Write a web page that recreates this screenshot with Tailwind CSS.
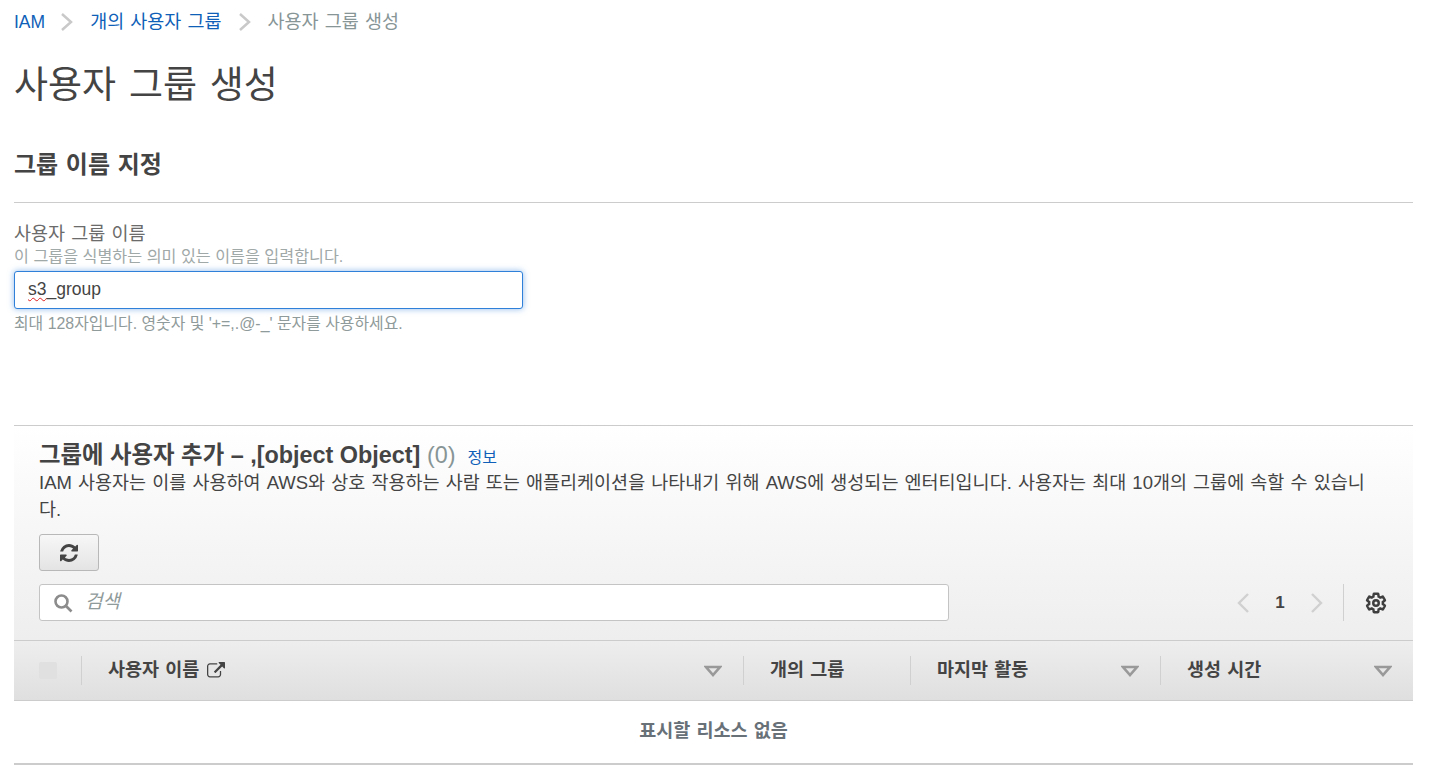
<!DOCTYPE html>
<html lang="ko">
<head>
    <meta charset="UTF-8">
    <title>사용자 그룹 생성</title>
    <script src="https://cdn.jsdelivr.net/npm/@tailwindcss/browser@4"></script>
</head>
<body class="bg-white text-[#444444] font-['Liberation_Sans','Noto_Sans_CJK_KR',sans-serif] overflow-hidden">
    <div class="h-[779px] pl-[14px] pr-[34px]">
        <!-- breadcrumb -->
        <nav class="flex items-center h-[44px] text-[18.500px] [word-spacing:1px]">
            <a href="#" class="text-[#0f5fb8] text-[17.500px]">IAM</a>
            <svg class="w-[14px] h-[18px] ml-[15px] mr-[16px]" viewBox="0 0 14 18" fill="none" stroke="#c9c9c9" stroke-width="2.500"><path d="M2 1l9 8-9 8"/></svg>
            <a href="#" class="text-[#0f5fb8]">개의 사용자 그룹</a>
            <svg class="w-[14px] h-[18px] ml-[16px] mr-[16px]" viewBox="0 0 14 18" fill="none" stroke="#c9c9c9" stroke-width="2.500"><path d="M2 1l9 8-9 8"/></svg>
            <span class="text-[#879596]">사용자 그룹 생성</span>
        </nav>

        <h1 class="text-[37px] leading-[44px] font-normal mt-[20px] [word-spacing:2.500px]">사용자 그룹 생성</h1>

        <section class="mt-[40px]">
            <div class="h-[54px] box-content border-b border-[#cccccc]">
                <h2 class="text-[24px] leading-[28px] font-bold pt-[3px] [word-spacing:1px]">그룹 이름 지정</h2>
            </div>
            <div class="h-[19px]"></div>
            <label class="block text-[18.500px] leading-[24px] text-[#6b6b6b] [word-spacing:1px]">사용자 그룹 이름</label>
            <p class="mt-[1px] text-[16.200px] leading-[18px] text-[#a0a8a8]">이 그룹을 식별하는 의미 있는 이름을 입력합니다.</p>
            <div class="mt-[6px] w-[509px] h-[38px] flex items-center px-[13px] pb-[2px] bg-white border border-[#2f80d8] rounded-[3px] shadow-[0_0_6px_rgba(47,128,216,0.55)] text-[17.500px]">
                <span class="underline decoration-wavy decoration-[#e02020] decoration-1 underline-offset-2">s3</span><span>_group</span>
            </div>
            <p class="mt-[6px] text-[15.900px] leading-[18px] text-[#8f9a9a]">최대 128자입니다. 영숫자 및 '+=,.@-_' 문자를 사용하세요.</p>
        </section>

        <section class="mt-[92px] border-t border-[#cccccc]">
            <div class="bg-gradient-to-b from-white to-[#eeeeee] h-[215px] px-[25px] pt-[16px] border-b border-[#cccccc]">
                <div class="flex items-baseline h-[27px]">
                    <h2 class="text-[23.400px] leading-[27px] font-bold">그룹에 사용자 추가 – ,[object Object] <span class="font-normal text-[#879596]">(0)</span></h2>
                    <a href="#" class="ml-[12px] text-[16px] text-[#0f5fb8]">정보</a>
                </div>
                <p class="text-[18.500px] leading-[27px] w-[1329px] [word-spacing:1px]">IAM 사용자는 이를 사용하여 AWS와 상호 작용하는 사람 또는 애플리케이션을 나타내기 위해 AWS에 생성되는 엔터티입니다. 사용자는 최대 10개의 그룹에 속할 수 있습니다.</p>
                <button class="mt-[11px] flex items-center justify-center w-[60px] h-[37px] rounded-[3px] border border-[#b8b8b8] bg-gradient-to-b from-[#f7f7f7] to-[#e4e4e4]">
                    <svg class="w-[18px] h-[18px]" viewBox="128 128 1536 1536" fill="#444444">
                        <path d="M1639 1056q0 5-1 7-64 268-268 434.500t-478 166.500q-146 0-282.500-55t-243.500-157l-129 129q-19 19-45 19t-45-19-19-45v-448q0-26 19-45t45-19h448q26 0 45 19t19 45-19 45l-137 137q71 66 161 102t187 36q134 0 250-65t186-179q11-17 53-117 8-23 30-23h192q13 0 22.500 9.500t9.500 22.500zm25-800v448q0 26-19 45t-45 19h-448q-26 0-45-19t-19-45 19-45l138-138q-148-137-349-137-134 0-250 65t-186 179q-11 17-53 117-8 23-30 23h-199q-13 0-22.500-9.500t-9.500-22.500v-7q65-268 270-434.500t480-166.500q146 0 284 55.500t245 156.500l130-129q19-19 45-19t45 19 19 45z"/>
                    </svg>
                </button>
                <div class="mt-[13px] flex items-center h-[37px]">
                    <div class="w-[910px] h-[37px] bg-white border border-[#c4c4c4] rounded-[3px] flex items-center pl-[13px]">
                        <svg class="w-[20px] h-[20px]" viewBox="0 0 20 20" fill="none" stroke="#8c8c8c" stroke-width="2.600"><circle cx="8.500" cy="8.500" r="6"/><path d="M13 13l5.500 5.500"/></svg>
                        <span class="ml-[12px] text-[19px] italic text-[#8f9a9a]">검색</span>
                    </div>
                    <div class="ml-auto flex items-center mr-[1px]">
                        <svg class="w-[14px] h-[20px]" viewBox="0 0 14 20" fill="none" stroke="#d0d0d0" stroke-width="2.400"><path d="M12 1L3 10l9 9"/></svg>
                        <span class="w-[60px] text-center text-[17px] font-bold">1</span>
                        <svg class="w-[14px] h-[20px]" viewBox="0 0 14 20" fill="none" stroke="#d0d0d0" stroke-width="2.400"><path d="M2 1l9 9-9 9"/></svg>
                        <div class="ml-[19px] w-px h-[37px] bg-[#d0d0d0]"></div>
                        <svg class="ml-[21px] w-[22px] h-[22px]" viewBox="0 0 24 24" fill="none" stroke="#3f3f3f" stroke-width="2.700">
                            <path d="M19.430 12.980c.04-.32.07-.64.07-.98s-.03-.66-.07-.98l2.110-1.650c.19-.15.24-.42.12-.64l-2-3.460c-.12-.22-.39-.3-.61-.22l-2.490 1c-.52-.4-1.080-.73-1.690-.98l-.38-2.650C14.460 2.180 14.250 2 14 2h-4c-.25 0-.46.18-.49.42l-.38 2.650c-.61.25-1.170.59-1.690.98l-2.490-1c-.23-.09-.49 0-.61.22l-2 3.460c-.13.22-.07.49.12.64l2.110 1.650c-.04.32-.07.65-.07.98s.03.66.07.98l-2.110 1.650c-.19.15-.24.42-.12.64l2 3.460c.12.22.39.3.61.22l2.490-1c.52.4 1.080.73 1.690.98l.38 2.650c.03.24.24.42.49.42h4c.25 0 .46-.18.49-.42l.38-2.650c.61-.25 1.170-.59 1.690-.98l2.490 1c.23.09.49 0 .61-.22l2-3.460c.12-.22.07-.49-.12-.64l-2.110-1.650z"/>
                            <circle cx="12" cy="12" r="3"/>
                        </svg>
                    </div>
                </div>
            </div>

            <!-- table header -->
            <div class="flex items-center h-[60px] border-b border-[#cccccc] bg-gradient-to-b from-[#eeeeee] to-[#dfdfdf] text-[18.500px] font-bold [word-spacing:1px]">
                <div class="w-[68px] h-[29px] flex items-center pl-[25px] border-r border-[#d0d0d0]">
                    <span class="w-[18px] h-[17px] rounded-[2px] bg-[#e0e0e0]"></span>
                </div>
                <div class="w-[662px] h-[29px] flex items-center pl-[26px] pr-[21px] border-r border-[#d0d0d0]">
                    <span class="-mt-[2px]">사용자 이름</span>
                    <svg class="ml-[8px] w-[18px] h-[18px]" viewBox="0 0 1792 1792" fill="#444444">
                        <path d="M1408 928v320q0 119-84.500 203.500t-203.500 84.500h-832q-119 0-203.500-84.500t-84.500-203.500v-832q0-119 84.500-203.500t203.500-84.500h704q14 0 23 9t9 23v64q0 14-9 23t-23 9h-704q-66 0-113 47t-47 113v832q0 66 47 113t113 47h832q66 0 113-47t47-113v-320q0-14 9-23t23-9h64q14 0 23 9t9 23zm384-864v512q0 26-19 45t-45 19-45-19l-176-176-652 652q-10 10-23 10t-23-10l-114-114q-10-10-10-23t10-23l652-652-176-176q-19-19-19-45t19-45 45-19h512q26 0 45 19t19 45z"/>
                    </svg>
                    <svg class="ml-auto w-[18px] h-[12px]" viewBox="0 0 18 12" fill="none" stroke="#999999" stroke-width="2.600"><path d="M2 2h14l-7 8z"/></svg>
                </div>
                <div class="w-[167px] h-[29px] flex items-center pl-[26px] border-r border-[#d0d0d0]"><span class="-mt-[2px]">개의 그룹</span></div>
                <div class="w-[250px] h-[29px] flex items-center pl-[26px] pr-[21px] border-r border-[#d0d0d0]">
                    <span class="-mt-[2px]">마지막 활동</span>
                    <svg class="ml-auto w-[18px] h-[12px]" viewBox="0 0 18 12" fill="none" stroke="#999999" stroke-width="2.600"><path d="M2 2h14l-7 8z"/></svg>
                </div>
                <div class="flex-1 h-[29px] flex items-center pl-[26px] pr-[21px]">
                    <span class="-mt-[2px]">생성 시간</span>
                    <svg class="ml-auto w-[18px] h-[12px]" viewBox="0 0 18 12" fill="none" stroke="#999999" stroke-width="2.600"><path d="M2 2h14l-7 8z"/></svg>
                </div>
            </div>
            <div class="h-[64px] pb-[2px] flex items-center justify-center border-b-2 border-[#cccccc] text-[18.500px] font-bold text-[#687078] [word-spacing:1px]">표시할 리소스 없음</div>
        </section>
    </div>
</body>
</html>
